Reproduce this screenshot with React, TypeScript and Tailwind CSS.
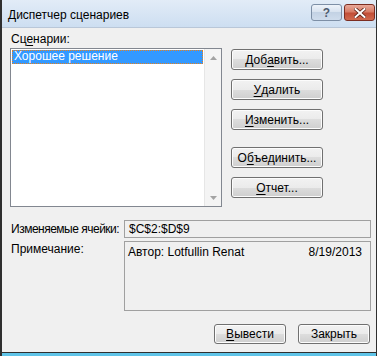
import React from 'react';

const FONT = "font-['Segoe_UI','Liberation_Sans','Noto_Sans',sans-serif]";

const BTN =
  'flex items-center justify-center rounded-[3px] border border-[#707070] bg-[linear-gradient(#f2f2f2_0%,#ebebeb_50%,#dddddd_50%,#cfcfcf_100%)] shadow-[inset_0_0_0_1px_#fcfcfc] text-[12px] text-black leading-none whitespace-nowrap';

const U: React.FC<{ children: React.ReactNode }> = ({ children }) => (
  <span className="underline underline-offset-[2px] decoration-1">{children}</span>
);

const SideButton: React.FC<{ children: React.ReactNode; className?: string }> = ({ children, className }) => (
  <div className={`${BTN} w-[92px] h-[21px] ${className ?? ''}`}>{children}</div>
);

export default function App() {
  return (
    <div className={`w-[381px] h-[356px] bg-white overflow-hidden ${FONT}`}>
      <div className="w-[377px] h-[356px] flex flex-col border-l-2 border-r border-[#2f2f2f] bg-[#cfdff0]">
        {/* Title bar */}
        <div className="h-[27px] shrink-0 flex items-center justify-between pl-[6px] pr-[1px] bg-[linear-gradient(#e2ecf7,#cddef1)]">
          <span className="text-[12px] text-black pt-[3px] whitespace-nowrap">Диспетчер сценариев</span>
          <div className="flex items-start gap-[2px] self-start pt-[4px]">
            <div className="w-[31px] h-[17px] rounded-[3px] border border-[#7d8fa6] bg-[linear-gradient(#eef3fa_0%,#d6e1ee_50%,#c3d2e4_50%,#cfdcec_100%)] flex items-center justify-center">
              <span className="text-[12px] font-bold text-[#4d5b6e] leading-none">?</span>
            </div>
            <div className="w-[31px] h-[17px] rounded-[3px] border border-[#7b2d21] bg-[linear-gradient(#e9a99b_0%,#d77d67_45%,#c24e37_55%,#d06a4f_100%)] flex items-center justify-center">
              <svg width="12" height="10" viewBox="0 0 12 10">
                <path d="M1.5 1 L10.5 9 M10.5 1 L1.5 9" stroke="#5a1f15" strokeWidth="3.6" strokeLinecap="square" />
                <path d="M1.5 1 L10.5 9 M10.5 1 L1.5 9" stroke="#ffffff" strokeWidth="2" strokeLinecap="square" />
              </svg>
            </div>
          </div>
        </div>

        {/* Client area */}
        <div className="flex-1 min-h-0 bg-[#f0f0f0] border-t border-[#b9c7d8] border-b border-b-[#2f2f2f] pl-[8px] pr-[5px] pt-[3px] text-[12px] text-black whitespace-nowrap">
          <div className="h-[17px] leading-[17px] pl-[1px]">
            Сц<U>е</U>нарии:
          </div>

          <div className="flex items-start gap-[9px]">
            {/* List box */}
            <div className="w-[212px] h-[159px] shrink-0 border border-[#828790] bg-white flex">
              <div className="flex-1 p-[1px]">
                <div className="h-[14px] bg-[#3399ff] text-white outline-1 outline-dotted outline-offset-[-1px] outline-[#e8801a] leading-[13px] pl-[2px]">
                  Хорошее решение
                </div>
              </div>
              <div className="w-[17px] bg-[#f4f4f4] border-l border-[#e6e6e6] flex flex-col items-center justify-between pt-[7px] pb-[6px]">
                <svg width="7" height="4" viewBox="0 0 7 4">
                  <path d="M3.5 0 L7 4 L0 4 Z" fill="#a3a3a3" />
                </svg>
                <svg width="7" height="4" viewBox="0 0 7 4">
                  <path d="M0 0 L7 0 L3.5 4 Z" fill="#a3a3a3" />
                </svg>
              </div>
            </div>

            {/* Side buttons */}
            <div className="flex flex-col pt-[1px]">
              <SideButton>
                Доб<U>а</U>вить...
              </SideButton>
              <SideButton className="mt-[9px]">
                <U>У</U>далить
              </SideButton>
              <SideButton className="mt-[9px]">
                <U>И</U>зменить...
              </SideButton>
              <SideButton className="mt-[17px]">
                О<U>б</U>ъединить...
              </SideButton>
              <SideButton className="mt-[9px]">
                <U>О</U>тчет...
              </SideButton>
            </div>
          </div>

          {/* Changing cells */}
          <div className="flex items-center mt-[13px] pl-[1px]">
            <span className="w-[113px] shrink-0 tracking-[-0.5px]">Изменяемые ячейки:</span>
            <div className="w-[247px] h-[18px] shrink-0 border border-[#a0a0a0] bg-[#f0f0f0] pl-[4px] leading-[16px]">
              $C$2:$D$9
            </div>
          </div>

          {/* Comment */}
          <div className="flex items-start mt-[3px] pl-[1px]">
            <span className="w-[113px] shrink-0 leading-[15px] pt-[1px]">Примечание:</span>
            <div className="w-[247px] h-[70px] shrink-0 border border-[#a0a0a0] bg-[#f0f0f0] pl-[3px] pr-[8px] pt-[3px] flex justify-between leading-[15px]">
              <span>Автор: Lotfullin Renat</span>
              <span>8/19/2013</span>
            </div>
          </div>

          {/* Bottom buttons */}
          <div className="flex justify-end gap-[12px] mt-[13px] pr-[1px]">
            <div className={`${BTN} w-[72px] h-[20px] border-[#3c7fb1] shadow-[inset_0_0_0_1px_#a6dcf6]`}>
              <U>В</U>ывести
            </div>
            <div className={`${BTN} w-[72px] h-[20px]`}>Закрыть</div>
          </div>
        </div>

        {/* Bottom frame */}
        <div className="h-[3px] shrink-0 bg-[#5fc4e8]" />
      </div>
    </div>
  );
}
